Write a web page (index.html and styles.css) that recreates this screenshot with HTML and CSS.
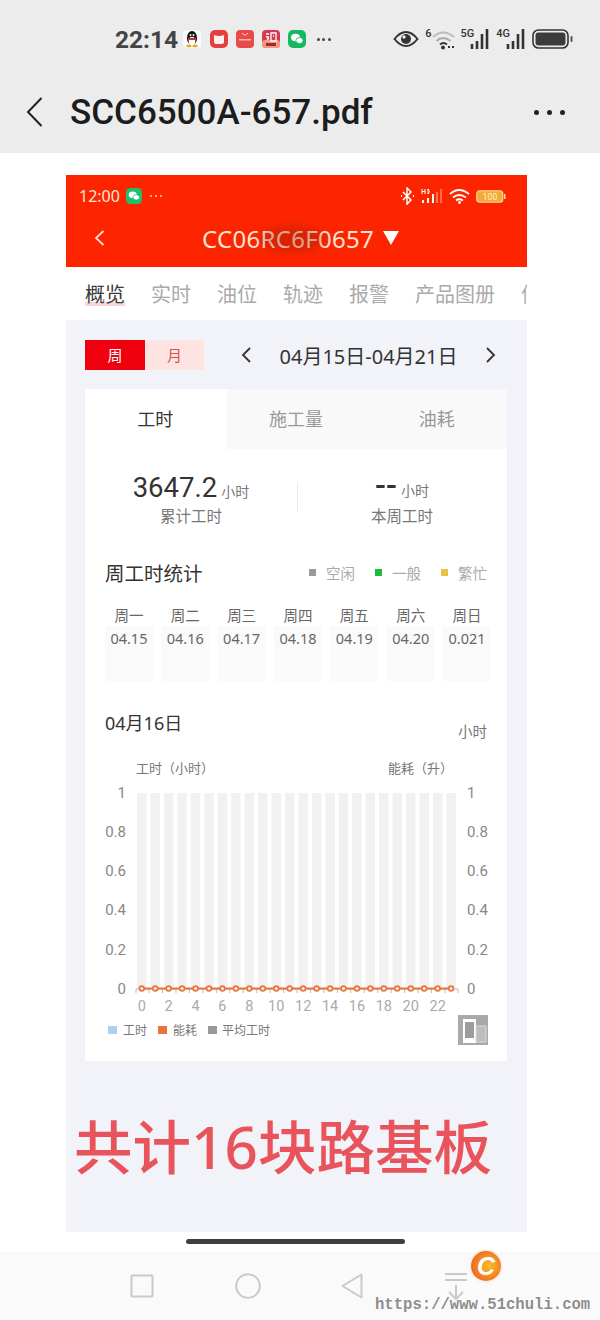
FILE: index.html
```html
<!DOCTYPE html>
<html lang="zh-CN">
<head>
    <meta charset="UTF-8">
    <title>SCC6500A-657.pdf</title>
    <link rel="stylesheet" href="styles.css">
</head>
<body>
<div class="screen">

    <!-- PDF viewer header -->
    <header class="viewer-head">
        <div class="status-bar">
            <div class="status-left">
                <span class="clock">22:14</span>
                <svg class="app-icon" viewBox="0 0 18 18"><rect width="18" height="18" rx="4" fill="#fafafa"/><ellipse cx="9" cy="8" rx="5" ry="7" fill="#111"/><ellipse cx="9" cy="11" rx="3.4" ry="4.2" fill="#fff"/><circle cx="7.5" cy="5" r="1" fill="#fff"/><circle cx="10.5" cy="5" r="1" fill="#fff"/><rect x="5" y="8" width="8" height="2" fill="#d8282a"/><ellipse cx="6" cy="16" rx="2.6" ry="1.2" fill="#e8a317"/><ellipse cx="12" cy="16" rx="2.6" ry="1.2" fill="#e8a317"/></svg>
                <svg class="app-icon" viewBox="0 0 18 18"><rect width="18" height="18" rx="5" fill="#e2403f"/><path d="M4 5q2.5 1 5 1t5-1v7q0 2-2 2H6q-2 0-2-2z" fill="#fbeeee"/></svg>
                <svg class="app-icon" viewBox="0 0 18 18"><rect width="18" height="18" rx="4" fill="#ea4a48"/><path d="M6 3q3 4 6 0" fill="none" stroke="#fbdcdc"/><rect x="3" y="9" width="12" height="1.5" fill="#f9b5b2"/></svg>
                <svg class="app-icon" viewBox="0 0 18 18"><rect width="18" height="18" rx="4" fill="#d43a52"/><rect y="10" width="18" height="8" rx="3" fill="#eb9d7d"/><path d="M4 4h3M4 7h3M5 10l2-2M9 3h5v8H9zM11 6h1" stroke="#fff" stroke-width="1.3" fill="none"/><rect x="4" y="13" width="10" height="3" fill="#b81f2e"/></svg>
                <svg class="app-icon" viewBox="0 0 18 18"><rect width="18" height="18" rx="5" fill="#16b85f"/><ellipse cx="7.5" cy="7.5" rx="4.5" ry="3.7" fill="#fff"/><ellipse cx="11.5" cy="10.5" rx="3.6" ry="3" fill="#fff" stroke="#16b85f" stroke-width=".8"/></svg>
                <span class="more-dots"><i></i><i></i><i></i></span>
            </div>
            <div class="status-right">
                <svg width="26" height="18" viewBox="0 0 26 18"><path d="M1.5 9Q7 2 13 2t11.5 7Q19 16 13 16T1.5 9z" fill="none" stroke="#333" stroke-width="2"/><circle cx="13" cy="9" r="5" fill="#333"/><circle cx="11" cy="7" r="1.7" fill="#ececec"/></svg>
                <div class="net-wifi">
                    <span class="net-tag">6</span>
                    <svg width="23" height="22" viewBox="0 0 23 22"><path d="M1 9q10-9 21 0" fill="none" stroke="#bbb" stroke-width="2"/><path d="M4.5 13q6.5-6 14 0" fill="none" stroke="#aaa" stroke-width="2"/><path d="M8 16.5q3.500-3 7 0" fill="none" stroke="#333" stroke-width="2"/><circle cx="11" cy="19.5" r="2" fill="#333"/><path d="M16 19h2M20 19h2" stroke="#333" stroke-width="2"/></svg>
                </div>
                <div class="net-signal"><span class="net-tag net-tag-g">5G</span><svg width="20" height="22" viewBox="0 0 20 22"><path d="M2 21v-5M7 21v-8M12 21V6M17 21V1" stroke="#333" stroke-width="2.6"/></svg></div>
                <div class="net-signal"><span class="net-tag net-tag-g">4G</span><svg width="20" height="22" viewBox="0 0 20 22"><path d="M2 21v-5M7 21v-8M12 21V6M17 21V1" stroke="#333" stroke-width="2.6"/></svg></div>
                <svg width="41" height="22" viewBox="0 0 41 22"><rect x="1" y="2" width="35" height="18" rx="5.5" fill="none" stroke="#333" stroke-width="1.6"/><rect x="3.5" y="4.5" width="30" height="13" rx="3" fill="#3c3c3c"/><rect x="38.5" y="8" width="2" height="6" rx="1" fill="#555"/></svg>
            </div>
        </div>
        <div class="viewer-title">
            <svg class="viewer-back" width="17" height="30" viewBox="0 0 17 30"><path d="M15.5 1 2 15l13.5 14" fill="none" stroke="#222" stroke-width="2"/></svg>
            <h1>SCC6500A-657.pdf</h1>
            <span class="viewer-more"><i></i><i></i><i></i></span>
        </div>
    </header>

    <!-- Screenshot inside the PDF -->
    <main class="doc">
        <section class="red-head">
            <div class="red-status">
                <div class="red-status-left">
                    <span>12:00</span>
                    <svg width="16" height="16" viewBox="0 0 18 18"><rect width="18" height="18" rx="5" fill="#1fc06a"/><ellipse cx="7.5" cy="7.5" rx="4.5" ry="3.7" fill="#fff"/><ellipse cx="11.5" cy="10.5" rx="3.6" ry="3" fill="#fff" stroke="#1fc06a" stroke-width=".8"/></svg>
                    <span class="red-dots"><i></i><i></i><i></i></span>
                </div>
                <div class="red-status-right">
                    <svg width="15" height="18" viewBox="0 0 15 18"><path d="M3 5l8 8-4 4V1l4 4-8 8" fill="none" stroke="#fff" stroke-width="1.5"/><path d="M1 9h1M13 9h1" stroke="#fff" stroke-width="2"/></svg>
                    <svg width="22" height="16" viewBox="0 0 22 16"><path d="M1 1v5M4 1v5M1 3.5h3M7 1v5M7 1q3 2.5 0 5" fill="none" stroke="#fff" stroke-width="1"/><path d="M2 15v-3M7 15v-5M12 15V6" stroke="#fff" stroke-width="2"/><path d="M16 15V4M20 15V1" stroke="#ff8a66" stroke-width="1.5"/></svg>
                    <svg width="21" height="16" viewBox="0 0 21 16"><path d="M1 6q9-8 19 0M4 9.5q6-5 13 0M7 12.5q3-2.5 7 0" fill="none" stroke="#fff" stroke-width="1.8"/><circle cx="10.5" cy="14.5" r="1.4" fill="#fff"/></svg>
                    <svg width="30" height="13" viewBox="0 0 30 13"><rect x=".75" y=".75" width="26" height="11.5" rx="3" fill="#f4a93a" stroke="#ffd9a0" stroke-width="1.2"/><text x="14" y="10" text-anchor="middle" class="battery-num">100</text><rect x="28" y="4" width="1.5" height="5" fill="#ffd9a0"/></svg>
                </div>
            </div>
            <div class="red-title">
                <svg class="red-back" width="11" height="16" viewBox="0 0 11 16"><path d="M9.5 1 2 8l7.500 7" fill="none" stroke="#ffdcd0" stroke-width="1.8"/></svg>
                <div class="machine">
                    <span class="machine-name">CC06RC6F0657</span>
                    <span class="machine-smudge"></span>
                    <svg width="16" height="14" viewBox="0 0 16 14"><path d="M0 0h16L8 14z" fill="#fff"/></svg>
                </div>
            </div>
        </section>

        <nav class="main-tabs">
            <span class="main-tab is-active">概览</span>
            <span class="main-tab">实时</span>
            <span class="main-tab">油位</span>
            <span class="main-tab">轨迹</span>
            <span class="main-tab">报警</span>
            <span class="main-tab">产品图册</span>
            <span class="main-tab">信</span>
        </nav>

        <div class="content">
            <div class="range-row">
                <div class="range-toggle">
                    <span class="range-week">周</span>
                    <span class="range-month">月</span>
                </div>
                <div class="date-nav">
                    <svg width="10" height="16" viewBox="0 0 10 16"><path d="M9 1 2 8l7 7" fill="none" stroke="#333" stroke-width="1.8"/></svg>
                    <span>04月15日-04月21日</span>
                    <svg width="10" height="16" viewBox="0 0 10 16"><path d="M1 1l7 7-7 7" fill="none" stroke="#333" stroke-width="1.8"/></svg>
                </div>
            </div>

            <div class="card">
                <div class="card-tabs">
                    <span class="card-tab is-active">工时</span>
                    <span class="card-tab">施工量</span>
                    <span class="card-tab">油耗</span>
                </div>

                <div class="stats">
                    <div class="stat">
                        <div class="stat-value"><b>3647.2</b> <small>小时</small></div>
                        <div class="stat-label">累计工时</div>
                    </div>
                    <div class="stat stat-right">
                        <div class="stat-value"><b class="stat-empty">--</b> <small>小时</small></div>
                        <div class="stat-label">本周工时</div>
                    </div>
                </div>

                <div class="week-head">
                    <h2>周工时统计</h2>
                    <div class="week-legend">
                        <span class="key"><i class="dot dot-idle"></i>空闲</span>
                        <span class="key"><i class="dot dot-normal"></i>一般</span>
                        <span class="key"><i class="dot dot-busy"></i>繁忙</span>
                    </div>
                </div>

                <div class="week-grid">
                    <div class="day"><span class="day-name">周一</span><span class="day-box">04.15</span></div>
                    <div class="day"><span class="day-name">周二</span><span class="day-box">04.16</span></div>
                    <div class="day"><span class="day-name">周三</span><span class="day-box">04.17</span></div>
                    <div class="day"><span class="day-name">周四</span><span class="day-box">04.18</span></div>
                    <div class="day"><span class="day-name">周五</span><span class="day-box">04.19</span></div>
                    <div class="day"><span class="day-name">周六</span><span class="day-box">04.20</span></div>
                    <div class="day"><span class="day-name">周日</span><span class="day-box">0.021</span></div>
                </div>

                <div class="day-head">
                    <h3>04月16日</h3>
                    <span>小时</span>
                </div>

                <!-- viewBox uses page coordinates so the numbers are easy to compare -->
                <svg class="chart" viewBox="85 755 422 295" width="422" height="295">
                    <text class="axis-name" x="136" y="773">工时（小时）</text>
                    <text class="axis-name" x="388" y="773">能耗（升）</text>

                    <g fill="#f1f1f1">
                        <rect x="137" y="793" width="9.5" height="196"/><rect x="150.45" y="793" width="9.5" height="196"/>
                        <rect x="163.9" y="793" width="9.5" height="196"/><rect x="177.35" y="793" width="9.5" height="196"/>
                        <rect x="190.8" y="793" width="9.5" height="196"/><rect x="204.25" y="793" width="9.5" height="196"/>
                        <rect x="217.7" y="793" width="9.5" height="196"/><rect x="231.15" y="793" width="9.5" height="196"/>
                        <rect x="244.6" y="793" width="9.5" height="196"/><rect x="258.05" y="793" width="9.5" height="196"/>
                        <rect x="271.5" y="793" width="9.5" height="196"/><rect x="284.95" y="793" width="9.5" height="196"/>
                        <rect x="298.4" y="793" width="9.5" height="196"/><rect x="311.85" y="793" width="9.5" height="196"/>
                        <rect x="325.3" y="793" width="9.5" height="196"/><rect x="338.75" y="793" width="9.5" height="196"/>
                        <rect x="352.2" y="793" width="9.5" height="196"/><rect x="365.65" y="793" width="9.5" height="196"/>
                        <rect x="379.1" y="793" width="9.5" height="196"/><rect x="392.55" y="793" width="9.5" height="196"/>
                        <rect x="406" y="793" width="9.5" height="196"/><rect x="419.45" y="793" width="9.5" height="196"/>
                        <rect x="432.9" y="793" width="9.5" height="196"/><rect x="446.35" y="793" width="9.5" height="196"/>
                    </g>

                    <g class="axis-num" text-anchor="end">
                        <text x="126" y="798">1</text><text x="126" y="837">0.8</text><text x="126" y="876">0.6</text>
                        <text x="126" y="915">0.4</text><text x="126" y="955">0.2</text><text x="126" y="994">0</text>
                    </g>
                    <g class="axis-num">
                        <text x="467" y="798">1</text><text x="467" y="837">0.8</text><text x="467" y="876">0.6</text>
                        <text x="467" y="915">0.4</text><text x="467" y="955">0.2</text><text x="467" y="994">0</text>
                    </g>

                    <path d="M136 989h322M136 989v4M149 989v4M162.5 989v4M176 989v4M189.4 989v4M202.9 989v4M216.3 989v4M229.8 989v4M243.2 989v4M256.7 989v4M270.1 989v4M283.6 989v4M297 989v4M310.5 989v4M323.9 989v4M337.4 989v4M350.8 989v4M364.3 989v4M377.7 989v4M391.2 989v4M404.6 989v4M418.1 989v4M431.5 989v4M445 989v4M458 989v4" stroke="#bbb" fill="none"/>
                    <path d="M141.75 988.5H451.1" stroke="#e8743f" stroke-width="2"/>
                    <g fill="#fbe9df" stroke="#e8743f" stroke-width="1.6">
                        <circle cx="141.75" cy="988.5" r="2.4"/><circle cx="155.2" cy="988.5" r="2.4"/><circle cx="168.65" cy="988.5" r="2.4"/>
                        <circle cx="182.1" cy="988.5" r="2.4"/><circle cx="195.55" cy="988.5" r="2.4"/><circle cx="209" cy="988.5" r="2.4"/>
                        <circle cx="222.45" cy="988.5" r="2.4"/><circle cx="235.9" cy="988.5" r="2.4"/><circle cx="249.35" cy="988.5" r="2.4"/>
                        <circle cx="262.8" cy="988.5" r="2.4"/><circle cx="276.25" cy="988.5" r="2.4"/><circle cx="289.7" cy="988.5" r="2.4"/>
                        <circle cx="303.15" cy="988.5" r="2.4"/><circle cx="316.6" cy="988.5" r="2.4"/><circle cx="330.05" cy="988.5" r="2.4"/>
                        <circle cx="343.5" cy="988.5" r="2.4"/><circle cx="356.95" cy="988.5" r="2.4"/><circle cx="370.4" cy="988.5" r="2.4"/>
                        <circle cx="383.85" cy="988.5" r="2.4"/><circle cx="397.3" cy="988.5" r="2.4"/><circle cx="410.75" cy="988.5" r="2.4"/>
                        <circle cx="424.2" cy="988.5" r="2.4"/><circle cx="437.65" cy="988.5" r="2.4"/><circle cx="451.1" cy="988.5" r="2.4"/>
                    </g>

                    <g class="axis-hour" text-anchor="middle">
                        <text x="141.75" y="1011">0</text><text x="168.65" y="1011">2</text><text x="195.55" y="1011">4</text>
                        <text x="222.45" y="1011">6</text><text x="249.35" y="1011">8</text><text x="276.25" y="1011">10</text>
                        <text x="303.15" y="1011">12</text><text x="330.05" y="1011">14</text><text x="356.95" y="1011">16</text>
                        <text x="383.85" y="1011">18</text><text x="410.75" y="1011">20</text><text x="437.65" y="1011">22</text>
                    </g>

                    <rect x="108" y="1026" width="9" height="8" fill="#aecfee"/>
                    <text class="chart-key" x="123" y="1035">工时</text>
                    <rect x="158" y="1026" width="9" height="8" fill="#e8743f"/>
                    <text class="chart-key" x="173" y="1035">能耗</text>
                    <rect x="208" y="1026" width="9" height="8" fill="#999"/>
                    <text class="chart-key" x="222" y="1035">平均工时</text>

                    <rect x="458" y="1015" width="30" height="30" fill="#a9a9a9"/>
                    <rect x="463" y="1019" width="13" height="24" fill="#fff"/>
                    <rect x="465" y="1022" width="9" height="16" fill="#9c9c9c"/>
                    <rect x="476" y="1026" width="10" height="16" fill="#bdbdbd" stroke="#dadada"/>
                </svg>
            </div>

            <p class="note">共计16块路基板</p>
        </div>
    </main>

    <div class="home-line"></div>

    <footer class="system-nav">
        <svg width="24" height="24" viewBox="0 0 24 24"><rect x="1.5" y="1.5" width="21" height="21" rx="1" fill="none" stroke="#c9c9c9" stroke-width="2"/></svg>
        <svg width="26" height="26" viewBox="0 0 26 26"><circle cx="13" cy="13" r="11.8" fill="none" stroke="#c9c9c9" stroke-width="2"/></svg>
        <svg width="22" height="26" viewBox="0 0 22 26"><path d="M20.5 1.5v23L1.500 13z" fill="none" stroke="#c9c9c9" stroke-width="2" stroke-linejoin="round"/></svg>
        <svg width="24" height="28" viewBox="0 0 24 28"><path d="M1 2h22M1 8h22M12 13v14M5 20l7 7 7-7" fill="none" stroke="#c9c9c9" stroke-width="2"/></svg>
    </footer>

    <!-- Site watermark over the nav bar -->
    <div class="watermark">
        <span class="wm-logo">C</span>
        <span class="wm-url">https://www.51chuli.com</span>
    </div>
</div>
</body>
</html>
```

FILE: styles.css
```css
* {
    box-sizing: border-box;
}
body {
    margin: 0;
    font-family: "Noto Sans", "Noto Sans CJK SC", sans-serif;
    color: #333;
    background: #fff;
}
h1, h2, h3, p {
    margin: 0;
    font-weight: 400;
}
svg {
    display: block;
    flex: none;
}
.screen {
    position: relative;
    width: 600px;
    height: 1320px;
    overflow: hidden;
    background: #fff;
}

/* Viewer header */
.viewer-head {
    height: 153px;
    background: #ececec;
}
.status-bar {
    height: 78px;
    padding: 0 27px 0 115px;
    display: flex;
    align-items: center;
    justify-content: space-between;
}
.status-left {
    display: flex;
    align-items: center;
    gap: 8.3px;
}
.clock {
    width: 60px;
    font-family: Roboto, sans-serif;
    font-size: 24.5px;
    font-weight: 700;
    color: #444;
}
.app-icon {
    width: 18px;
    height: 18px;
}
.more-dots,
.red-dots {
    display: flex;
    gap: 2.5px;
    margin-left: 2px;
}
.more-dots i,
.red-dots i {
    width: 3px;
    height: 3px;
    border-radius: 50%;
    background: #444;
}
.red-dots i {
    width: 2.5px;
    height: 2.5px;
    background: #ffd0c0;
}
.status-right {
    display: flex;
    align-items: center;
    gap: 6px;
}
.net-wifi,
.net-signal {
    display: flex;
    align-items: flex-start;
}
.net-tag {
    font-family: Roboto, sans-serif;
    font-size: 11px;
    font-weight: 500;
    line-height: 12px;
    color: #333;
}
.net-tag-g {
    margin-right: -4px;
}
.viewer-title {
    height: 68px;
    padding: 0 35px 0 26px;
    display: flex;
    align-items: center;
}
.viewer-back {
    margin-right: 27px;
}
h1 {
    flex: 1;
    font-family: Roboto, sans-serif;
    font-size: 35px;
    font-weight: 500;
    color: #1c1c1c;
}
.viewer-more {
    display: flex;
    gap: 8px;
}
.viewer-more i {
    width: 5px;
    height: 5px;
    border-radius: 50%;
    background: #222;
}

/* Document page */
.doc {
    width: 461px;
    margin: 22px 0 0 66px;
}
.red-head {
    height: 92px;
    background: #fd2500;
    color: #ffe4d6;
}
.red-status {
    height: 42px;
    padding: 0 21px 0 13px;
    display: flex;
    align-items: center;
    justify-content: space-between;
    font-size: 16px;
}
.red-status-left,
.red-status-right {
    display: flex;
    align-items: center;
    gap: 6px;
}
.battery-num {
    font-family: Roboto, sans-serif;
    font-size: 8.5px;
    fill: #fff2d0;
}
.red-title {
    position: relative;
    height: 42px;
    padding-left: 8px;
    display: flex;
    align-items: center;
    justify-content: center;
}
.red-back {
    position: absolute;
    left: 28px;
    top: 13px;
}
.machine {
    position: relative;
    display: flex;
    align-items: center;
    gap: 9px;
}
.machine-name {
    font-size: 24px;
    letter-spacing: .3px;
}
.machine-smudge {
    position: absolute;
    left: 58px;
    top: 4px;
    width: 64px;
    height: 26px;
    border-radius: 50%;
    background: rgba(150, 30, 10, .35);
    filter: blur(5px);
}
.main-tabs {
    height: 53px;
    padding-left: 19px;
    display: flex;
    align-items: center;
    gap: 26px;
    overflow: hidden;
    font-size: 20px;
    white-space: nowrap;
    color: #aaa;
}
.main-tab {
    flex: none;
}
.main-tab.is-active {
    color: #3a3a3a;
    background: linear-gradient(transparent 78%, #f9d5d5 78%, #f9d5d5 92%, transparent 92%);
}
.content {
    height: 912px;
    padding: 20px 20px 0 19px;
    background: #f1f3f8;
}
.range-row {
    height: 30px;
    display: flex;
    align-items: center;
}
.range-toggle {
    display: flex;
    font-size: 15px;
    line-height: 30px;
    text-align: center;
}
.range-week {
    width: 60px;
    background: #f0000f;
    color: #fff;
}
.range-month {
    width: 59px;
    background: #fde4e2;
    color: #d9534a;
}
.date-nav {
    flex: 1;
    padding: 0 11px 0 37px;
    display: flex;
    align-items: center;
    justify-content: space-between;
    font-size: 20px;
    color: #333;
}
.card {
    width: 422px;
    height: 672px;
    margin-top: 19px;
    background: #fff;
}
.card-tabs {
    height: 60px;
    display: flex;
    background: #f9f9f9;
    text-align: center;
    font-size: 18px;
    line-height: 60px;
    color: #999;
}
.card-tab {
    flex: 1;
}
.card-tab.is-active {
    background: #fff;
    color: #333;
}
.stats {
    height: 107px;
    padding-top: 21px;
    display: flex;
}
.stat {
    flex: 212;
    text-align: center;
}
.stat-value {
    height: 36px;
    line-height: 36px;
}
.stat-value b {
    font-family: Roboto, sans-serif;
    font-size: 27.5px;
    font-weight: 400;
    color: #333;
}
.stat-value small {
    font-size: 14px;
    color: #777;
}
.stat-value .stat-empty {
    font-size: 32px;
    font-weight: 500;
    line-height: 30px;
}
.stat-label {
    margin-top: -2px;
    font-size: 15.5px;
    line-height: 24px;
    color: #777;
}
.stat-right {
    flex: 210;
    background: linear-gradient(#eee, #eee) left 0 top 12px / 1px 30px no-repeat;
}
.week-head {
    height: 32px;
    padding: 0 20px;
    display: flex;
    align-items: center;
    justify-content: space-between;
}
h2 {
    font-size: 19.5px;
    color: #333;
}
.week-legend {
    display: flex;
    gap: 20px;
    font-size: 14.5px;
    color: #aaa;
}
.key {
    display: flex;
    align-items: center;
}
.dot {
    width: 7px;
    height: 7px;
    margin-right: 10px;
}
.dot-idle {
    background: #999;
}
.dot-normal {
    background: #1fb93e;
}
.dot-busy {
    background: #eec23f;
}
.week-grid {
    margin: 16px 16px 0 20px;
    display: grid;
    grid-template-columns: repeat(7, 1fr);
    gap: 8.5px;
}
.day {
    display: flex;
    flex-direction: column;
    align-items: center;
    font-size: 14.5px;
    color: #666;
}
.day-name {
    height: 22px;
    line-height: 22px;
}
.day-box {
    width: 100%;
    height: 55px;
    line-height: 24px;
    text-align: center;
    background: #fafafa;
}
.day-head {
    height: 32px;
    margin-top: 26px;
    padding: 0 20px;
    display: flex;
    justify-content: space-between;
}
h3 {
    font-size: 18px;
    line-height: 32px;
    color: #333;
}
.day-head span {
    margin-top: 8px;
    font-size: 14.5px;
    line-height: 32px;
    color: #777;
}
.chart {
    margin-top: 16px;
}
.axis-name {
    font-size: 13px;
    fill: #777;
}
.chart-key {
    font-size: 12px;
    fill: #777;
}
.axis-num text {
    font-family: Roboto, sans-serif;
    font-size: 15px;
    fill: #888;
}
.axis-hour text {
    font-family: Roboto, sans-serif;
    font-size: 14.5px;
    fill: #aaa;
}
.note {
    margin: 49px 0 0 -11px;
    font-size: 58.5px;
    font-weight: 500;
    line-height: 72px;
    white-space: nowrap;
    color: #e9545c;
}

/* Phone bottom */
.home-line {
    width: 219px;
    height: 5px;
    margin: 7px 0 0 186px;
    border-radius: 3px;
    background: #3f3f3f;
}
.system-nav {
    height: 71px;
    margin-top: 8px;
    padding: 0 132px 4px 130px;
    display: flex;
    align-items: center;
    justify-content: space-between;
    background: #fafafa;
}
.watermark {
    position: absolute;
    right: 9px;
    bottom: 7px;
    width: 216px;
    height: 64px;
}
.wm-logo {
    position: absolute;
    left: 94px;
    top: 0;
    width: 34px;
    height: 34px;
    border-radius: 50%;
    border: 2px solid #f5f0e8;
    background: radial-gradient(circle at 60% 50%, #fcbc2c, #ec6a1e 75%);
    color: #fff;
    font: italic 700 25px/30px "Liberation Sans", sans-serif;
    text-align: center;
}
.wm-url {
    position: absolute;
    left: 0;
    bottom: -1px;
    font-family: "Liberation Mono", monospace;
    font-size: 15.6px;
    font-weight: 700;
    line-height: 18px;
    white-space: nowrap;
    color: #8d8d8d;
    text-shadow: 0 0 2px #fff, 0 0 2px #fff;
}
```
